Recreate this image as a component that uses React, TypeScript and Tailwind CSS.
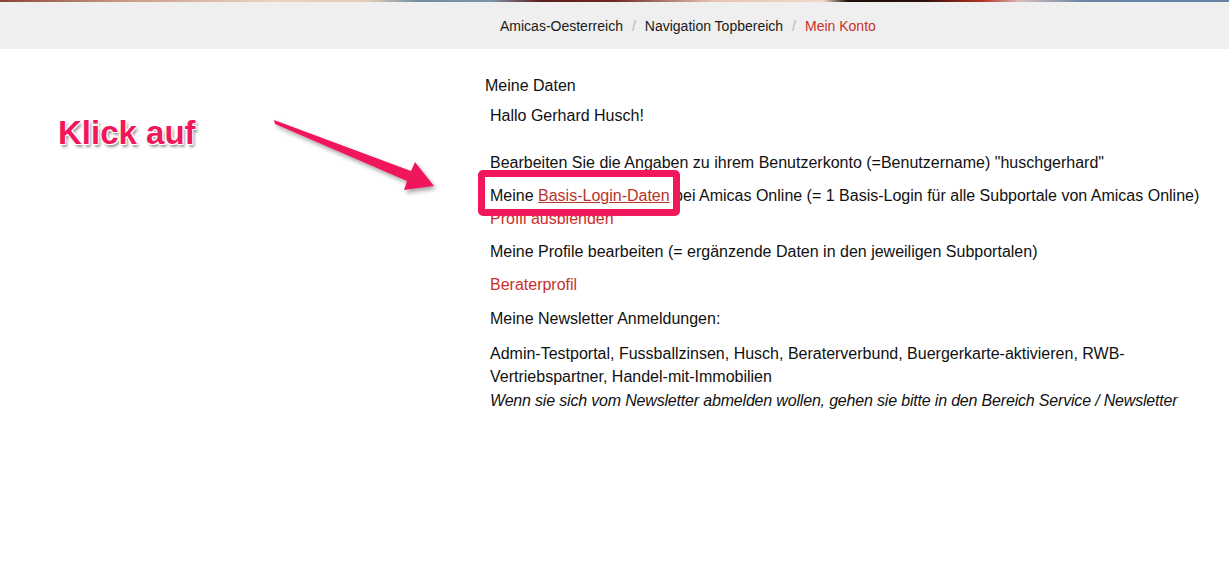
import React from "react";

type Crumb = {
  label: string;
  active?: boolean;
};

const crumbs: Crumb[] = [
  { label: "Amicas-Oesterreich" },
  { label: "Navigation Topbereich" },
  { label: "Mein Konto", active: true },
];

const newsletters =
  "Admin-Testportal, Fussballzinsen, Husch, Beraterverbund, Buergerkarte-aktivieren, RWB-Vertriebspartner, Handel-mit-Immobilien";

function Breadcrumb() {
  return (
    <nav className="bg-[#efefef] h-[47px] flex items-center pl-[500px] text-[14px] leading-[20px]">
      {crumbs.map((crumb, i) => (
        <span key={crumb.label} className="flex items-center">
          {i > 0 && <span className="px-[9px] text-[#b5b5b5]">/</span>}
          <span className={crumb.active ? "text-[#c9302c]" : "text-[#1a1a1a]"}>
            {crumb.label}
          </span>
        </span>
      ))}
    </nav>
  );
}

function Annotation() {
  return (
    <>
      <div className="absolute left-[58px] top-[113px] text-[33px] font-bold leading-[40px] text-[#f0175b] [text-shadow:-1px_-1px_0_#fff,1px_-1px_0_#fff,-1px_1px_0_#fff,1px_1px_0_#fff,2px_3px_3px_rgba(0,0,0,0.45)]">
        Klick auf
      </div>
      <svg
        className="absolute left-0 top-0 pointer-events-none"
        width="1229"
        height="569"
        viewBox="0 0 1229 569"
      >
        <defs>
          <filter id="arrowShadow" x="-20%" y="-20%" width="140%" height="140%">
            <feDropShadow dx="2" dy="3" stdDeviation="2" floodColor="#000" floodOpacity="0.35" />
          </filter>
        </defs>
        <polygon
          points="274,120 411,171 415,162 434,186 404,190 407,181 275,124"
          fill="#f0175b"
          strokeLinejoin="round"
          filter="url(#arrowShadow)"
        />
      </svg>
      <div className="absolute left-[478px] top-[170px] w-[202px] h-[46px] border-[7px] border-[#f0175b] rounded-[5px] pointer-events-none" />
    </>
  );
}

export default function App() {
  return (
    <div className="relative w-[1229px] h-[569px] bg-white overflow-hidden font-['Liberation_Sans',Arial,sans-serif] text-[#111]">
      <div className="h-[2px] bg-[linear-gradient(90deg,#8a4636_0%,#c99a84_10%,#ead3bf_22%,#e5cbb5_30%,#6f8ea6_34%,#7b93a8_40%,#5a1d1a_44%,#6e2a22_50%,#e7c4b0_58%,#f0d8c8_67%,#1c0d0a_69%,#2a0f0c_75%,#b83422_80%,#d9bcb8_83%,#6a86a6_88%,#6182a6_100%)]" />
      <Breadcrumb />

      <main className="flex pt-[25px]">
        <aside className="w-[485px] shrink-0" />
        <section className="w-[730px] text-[16px] leading-[23px]">
          <h2 className="mb-[7px]">Meine Daten</h2>
          <div className="px-[5px]">
            <p className="mb-[24px]">Hallo Gerhard Husch!</p>
            <p className="mb-[10px]">
              Bearbeiten Sie die Angaben zu ihrem Benutzerkonto (=Benutzername) "huschgerhard"
            </p>
            <p className="mb-[10px]">
              Meine{" "}
              <a href="#" className="text-[#b8352c] underline">
                Basis-Login-Daten
              </a>{" "}
              bei Amicas Online (= 1 Basis-Login für alle Subportale von Amicas Online)
              <br />
              <a href="#" className="text-[#c9302c]">
                Profil ausblenden
              </a>
            </p>
            <p className="mb-[10px]">
              Meine Profile bearbeiten (= ergänzende Daten in den jeweiligen Subportalen)
            </p>
            <p className="mb-[11px]">
              <a href="#" className="text-[#c9302c]">
                Beraterprofil
              </a>
            </p>
            <p className="mb-[12px]">Meine Newsletter Anmeldungen:</p>
            <p className="mb-[1px]">{newsletters}</p>
            <p className="italic tracking-[-0.18px]">
              Wenn sie sich vom Newsletter abmelden wollen, gehen sie bitte in den Bereich Service / Newsletter
            </p>
          </div>
        </section>
      </main>

      <Annotation />
    </div>
  );
}
